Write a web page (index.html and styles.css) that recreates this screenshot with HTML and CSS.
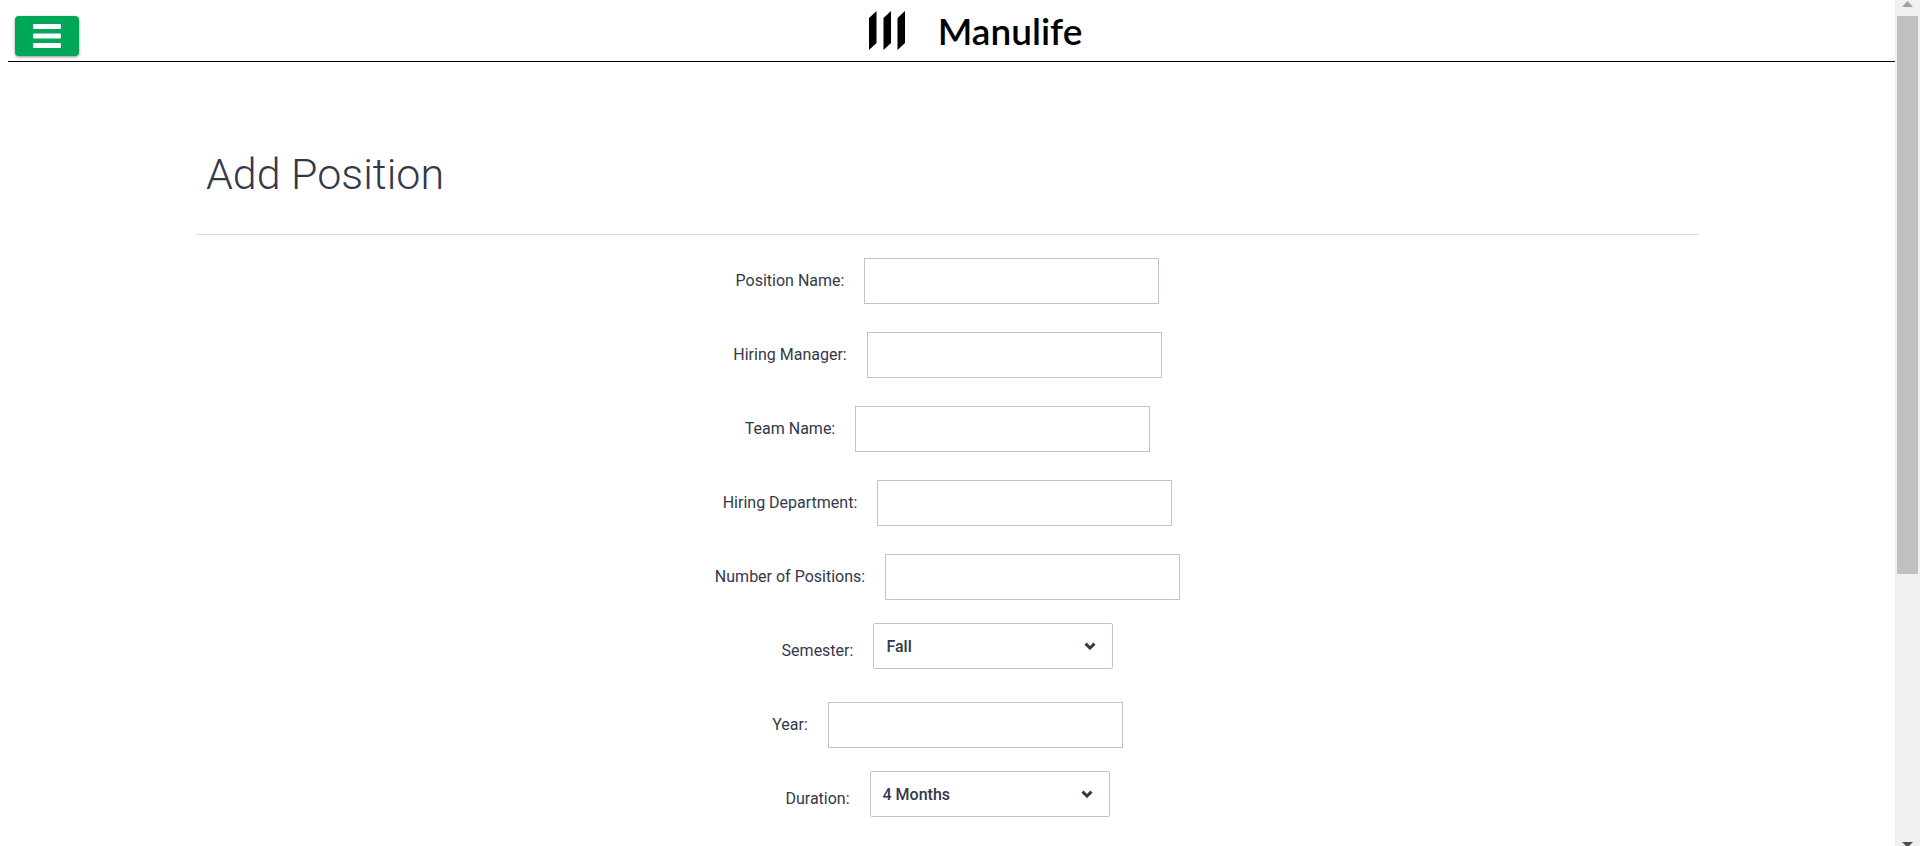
FILE: index.html
```html
<!DOCTYPE html>
<html lang="en">
<head>
<meta charset="utf-8">
<title>Add Position</title>
<link rel="stylesheet" href="styles.css">
</head>
<body class="page">
<div class="view">
  <header class="topbar">
    <button class="menu" type="button" aria-label="Menu">
      <svg width="28" height="24" viewBox="0 0 28 24" fill="#fff" aria-hidden="true"><rect width="28" height="5" rx="1"/><rect y="9.500" width="28" height="5" rx="1"/><rect y="19" width="28" height="5" rx="1"/></svg>
    </button>
    <a class="brand" href="#">
      <svg width="37" height="39" viewBox="0 0 37 39" aria-hidden="true"><path d="M0 7 7.500 0V32L0 39ZM14.500 7 22 0V32L14.500 39ZM28.500 7 36 0V32L28.500 39Z"/></svg>
      <span class="brand-name">Manulife</span>
    </a>
  </header>
  <main class="content">
    <h1 class="title">Add Position</h1>
    <form class="form">
      <div class="row"><label for="name">Position Name:</label><input class="field" id="name" type="text"></div>
      <div class="row"><label for="manager">Hiring Manager:</label><input class="field" id="manager" type="text"></div>
      <div class="row"><label for="team">Team Name:</label><input class="field" id="team" type="text"></div>
      <div class="row"><label for="department">Hiring Department:</label><input class="field" id="department" type="text"></div>
      <div class="row"><label for="count">Number of Positions:</label><input class="field" id="count" type="text"></div>
      <div class="row"><label for="semester">Semester:</label>
        <div class="picker"><select class="select" id="semester"><option>Fall</option></select><svg class="chevron" width="12" height="8" viewBox="0 0 12 8" aria-hidden="true"><path d="M1.500 1.700 6 6 10.500 1.700"/></svg></div>
      </div>
      <div class="row"><label for="year">Year:</label><input class="field" id="year" type="text"></div>
      <div class="row"><label for="duration">Duration:</label>
        <div class="picker"><select class="select" id="duration"><option>4 Months</option></select><svg class="chevron" width="12" height="8" viewBox="0 0 12 8" aria-hidden="true"><path d="M1.500 1.700 6 6 10.500 1.700"/></svg></div>
      </div>
    </form>
  </main>
</div>
<div class="scrollbar" aria-hidden="true">
  <svg class="arrow" width="11" height="6" viewBox="0 0 11 6" fill="#a0a0a0"><path d="M0 6 5.500 0 11 6Z"/></svg>
  <div class="track"><div class="thumb"></div></div>
  <svg class="arrow" width="11" height="4" viewBox="0 0 11 4" fill="#505050"><path d="M0 0H11L7 4H4Z"/></svg>
</div>
</body>
</html>
```

FILE: styles.css
```css
* { box-sizing: border-box; }

.page {
  display: flex;
  height: 100vh;
  margin: 0;
  overflow: hidden;
  background: #fff;
  color: #34384b;
  font: 400 16px/24px Roboto, "Liberation Sans", sans-serif;
}

.view { flex: 1; overflow: hidden; }

.topbar {
  display: grid;
  grid-template-columns: 1fr auto 1fr;
  align-items: center;
  height: 62px;
  margin-left: 8px;
  border-bottom: 1px solid #000;
}

.menu {
  display: flex;
  align-items: center;
  justify-content: center;
  width: 64px;
  height: 40px;
  margin: 10px 0 0 7px;
  padding: 0;
  border: 0;
  border-radius: 4px;
  background: #00a758;
  box-shadow: 0 1px 3px rgba(0, 0, 0, 0.45);
}

.brand {
  display: flex;
  align-items: center;
  gap: 32px;
  padding-left: 48px;
  color: #000;
  text-decoration: none;
}

.brand-name { font: 600 37px/48px Lato, sans-serif; }

.content { padding: 0 8px; }

.title {
  width: 80%;
  margin: 0 auto;
  padding: 80px 10px 28px;
  border-bottom: 1px solid #e0e0e0;
  font-size: 43px;
  font-weight: 300;
  line-height: 64px;
}

.form { padding-top: 9px; }

.row {
  display: flex;
  align-items: center;
  justify-content: center;
  gap: 20px;
  height: 74px;
}

.field {
  width: 295px;
  height: 46px;
  padding: 0 12px;
  border: 1px solid #c2c3c9;
  background: #fff;
  color: inherit;
  font: inherit;
}

.picker { position: relative; width: 240px; margin-bottom: 10px; }

.select {
  display: block;
  width: 100%;
  height: 46px;
  padding: 2px 12px 0;
  border: 1px solid #c2c3c9;
  border-radius: 2px;
  background: #fff;
  color: inherit;
  font: inherit;
  font-weight: 500;
  appearance: none;
}

.chevron {
  position: absolute;
  top: 19px;
  right: 17px;
  fill: none;
  stroke: #34384b;
  stroke-width: 3;
  pointer-events: none;
}

.scrollbar {
  display: flex;
  flex-direction: column;
  align-items: center;
  width: 25px;
  padding-top: 1px;
  background: #f0f0f0;
}

.arrow { flex: none; }

.track { flex: 1; width: 21px; padding-top: 9px; }

.thumb { height: 67.6%; background: #c0c0c0; }
```
